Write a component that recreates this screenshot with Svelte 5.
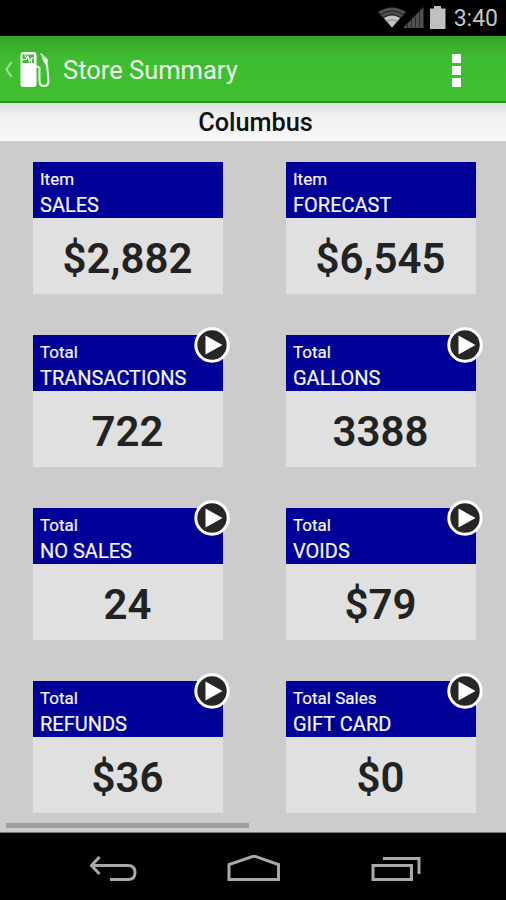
<script lang="ts">
	type Card = { label: string; name: string; value: string; more?: boolean };

	let {
		store = 'Columbus',
		time = '3:40',
		cards = [
			{ label: 'Item', name: 'SALES', value: '$2,882' },
			{ label: 'Item', name: 'FORECAST', value: '$6,545' },
			{ label: 'Total', name: 'TRANSACTIONS', value: '722', more: true },
			{ label: 'Total', name: 'GALLONS', value: '3388', more: true },
			{ label: 'Total', name: 'NO SALES', value: '24', more: true },
			{ label: 'Total', name: 'VOIDS', value: '$79', more: true },
			{ label: 'Total', name: 'REFUNDS', value: '$36', more: true },
			{ label: 'Total Sales', name: 'GIFT CARD', value: '$0', more: true }
		]
	} = $props<{ store?: string; time?: string; cards?: Card[] }>();
</script>

<div class="screen">
	<div class="status">
		<svg class="signals" width="70" height="30" viewBox="0 0 70 30" aria-hidden="true">
			<path d="M0 12Q14 3 28 12L14 27.500Z" fill="#505050" />
			<path d="M2.500 14.500Q14 7.500 25.500 14.500" fill="none" stroke="#1c1c1c" stroke-width="1" />
			<path d="M6 18Q14 13 22 18L14 27.500Z" fill="#c4c4c4" />
			<path d="M5 17.500Q14 11.500 23 17.500" fill="none" stroke="#1c1c1c" stroke-width="1" />
			<path d="M8.500 21.500Q14 18 19.500 21.500" fill="none" stroke="#777" stroke-width=".8" />
			<path d="M25 28L45.500 7V28Z" fill="#505050" />
			<path d="M29.500 23V28M33.500 19V28M37.500 15V28M41.500 11V28" stroke="#2c2c2c" stroke-width="1" />
			<path d="M52 8.500h4V6h7v2.500h4.500V29H52Z" fill="#c0c0c0" />
		</svg>
		<span class="time">{time}</span>
	</div>

	<header class="bar">
		<svg class="logo" width="52" height="44" viewBox="0 0 52 44" aria-hidden="true">
			<path d="M11.500 14L6.500 21.500L11.500 29" fill="none" stroke="#a5e19c" stroke-width="2" />
			<path d="M20.500 7q0-3 3-3h10q3 0 3 3v29q0 3-3 3H23.500q-3 0-3-3Z" fill="#fff" />
			<path d="M22.500 6.500h11.500v8.500H22.500Z" fill="#4fb244" />
			<path d="M22.500 11.500h3.500l2-3 1.500 5 2-3.500h2.500M25 7l1 2.500M31.500 12v3" fill="none" stroke="#fff" stroke-width="1.200" />
			<path d="M36 18.500h1q2.500 0 2.500 2.500V33q0 5 4.500 5t4.500-5L47 16" fill="none" stroke="#effbed" stroke-width="2" />
			<path d="M40.500 5.500L47 11.500V20" fill="none" stroke="#d8f3d4" stroke-width="1.500" />
			<path d="M41.500 7.500L47 12V19L43 12.500Z" fill="#effbed" />
		</svg>
		<h1>Store Summary</h1>
		<button class="menu" aria-label="Menu"><i></i><i></i><i></i></button>
	</header>

	<h2>{store}</h2>

	<main>
		<div class="grid">
			{#each cards as card}
				<section class="card">
					<div class="head">
						<span class="label">{card.label}</span>
						<span class="name">{card.name}</span>
					</div>
					<div class="value">{card.value}</div>
					{#if card.more}
						<svg class="play" width="36" height="36" viewBox="0 0 36 36" aria-hidden="true">
							<circle cx="18" cy="18" r="16.200" fill="#262626" stroke="#fff" stroke-width="3" />
							<path d="M11.500 8.500L28.500 18L11.500 27.500Z" fill="#fff" />
						</svg>
					{/if}
				</section>
			{/each}
		</div>
		<div class="scroll"></div>
	</main>

	<nav>
		<svg width="48" height="30" viewBox="0 0 48 30" aria-label="Back">
			<path d="M10.500 2L2.500 10.500L10.500 19M3 10.500H39q7 0 7 7t-7 7H21" />
		</svg>
		<svg width="54" height="30" viewBox="0 0 54 30" aria-label="Home">
			<path d="M2 24.500V9.500L27 1L51.500 9.500V24.500Z" />
		</svg>
		<svg width="50" height="30" viewBox="0 0 50 30" aria-label="Recent">
			<path d="M2 10.500H40.500V24.500H2ZM12 3.500H48V19" />
		</svg>
	</nav>
</div>

<style>
	:global(body) {
		margin: 0;
		background: #000;
	}

	.screen {
		width: 506px;
		height: 900px;
		display: flex;
		flex-direction: column;
		overflow: hidden;
		background: #000;
		font-family: Roboto, sans-serif;
	}

	.status {
		height: 36px;
		flex: none;
		display: flex;
		justify-content: flex-end;
		box-sizing: border-box;
		padding-right: 8px;
	}

	.signals {
		margin-right: 6px;
	}

	.time {
		font-size: 23px;
		line-height: 38px;
		color: #c4c4c4;
	}

	.bar {
		height: 67px;
		flex: none;
		box-sizing: border-box;
		display: flex;
		align-items: center;
		background: linear-gradient(#37a329, #3fbd30 35%, #41be32);
		border-bottom: 2px solid #26991c;
	}

	.logo {
		margin-top: 2px;
	}

	h1 {
		margin: 3px 0 0 11px;
		font-size: 25.5px;
		font-weight: 400;
		line-height: 34px;
		color: #effbed;
	}

	.menu {
		display: flex;
		flex-direction: column;
		gap: 3px;
		margin: 4px 45px 0 auto;
		padding: 0;
		border: 0;
		background: none;
	}

	.menu i {
		width: 9px;
		height: 9px;
		background: #fff;
	}

	h2 {
		height: 38px;
		flex: none;
		box-sizing: border-box;
		margin: 0;
		padding-left: 5px;
		font-size: 25.3px;
		font-weight: 500;
		line-height: 39px;
		text-align: center;
		color: #111;
		background: linear-gradient(#dedede, #f1f1f1 35%, #f7f7f7);
	}

	main {
		height: 692px;
		flex: none;
		box-sizing: border-box;
		background: #ccc;
		border-bottom: 1px solid #777;
	}

	.grid {
		display: grid;
		grid-template-columns: 190px 190px;
		column-gap: 63px;
		row-gap: 41px;
		padding: 21px 30px 0 33px;
	}

	.card {
		position: relative;
		height: 132px;
		background: #e0e0e0;
	}

	.head {
		height: 56px;
		box-sizing: border-box;
		display: flex;
		flex-direction: column;
		padding: 4px 7px 0;
		background: #000096;
		color: #f6f6ff;
	}

	.label {
		font-size: 17px;
		line-height: 26px;
		-webkit-text-stroke: 0.2px;
	}

	.name {
		font-size: 20px;
		line-height: 26px;
		-webkit-text-stroke: 0.2px;
	}

	.value {
		font-size: 42px;
		font-weight: 600;
		line-height: 81px;
		text-align: center;
		text-indent: -1px;
		color: #222;
	}

	.play {
		position: absolute;
		top: -8px;
		right: -7px;
	}

	.scroll {
		width: 243px;
		height: 5px;
		margin: 10px 0 0 6px;
		background: #9e9e9e;
	}

	nav {
		flex: 1;
		display: flex;
		justify-content: center;
		gap: 90px;
		padding: 22px 0 0 4px;
	}

	nav path {
		fill: none;
		stroke: #a9a9a9;
		stroke-width: 3;
	}
</style>
